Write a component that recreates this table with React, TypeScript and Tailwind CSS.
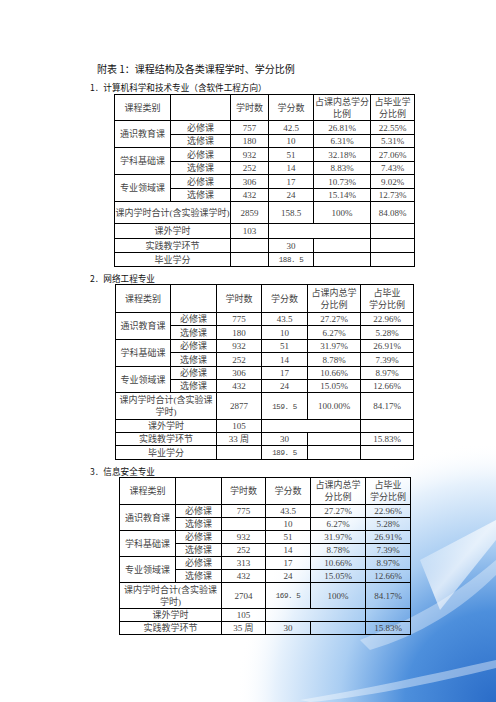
import type { ReactNode } from 'react'

const SERIF = 'font-["Liberation_Serif","Noto_Sans_CJK_SC",serif]'

type Row = [string, string, string, string, string]

interface TableSpec {
  left: number
  widths: number[]
  headH: number
  rowHs: number[]
  head5: ReactNode
  head6: ReactNode
  groups: { name: string; rows: Row[] }[]
  total: { label: ReactNode; h: number; vals: ReactNode[] }
  outside: { h: number; val: string }
  practice: { h: number; hours: string; credit: string; pct: string }
  grad?: { h: number; val: ReactNode }
}

function Mono({ children }: { children: ReactNode }) {
  return <span className='font-["Liberation_Mono",monospace] text-[7.5px] tracking-[-0.4px]'>{children}</span>
}

const cell = 'border border-black text-center align-middle p-0 leading-[12px]'

function CourseTable({ spec }: { spec: TableSpec }) {
  let r = 0
  return (
    <table
      className={`table-fixed border-collapse text-[9px] text-[#444] ${SERIF}`}
      style={{ marginLeft: spec.left, width: spec.widths.reduce((a, b) => a + b, 0) }}
    >
      <colgroup>
        {spec.widths.map((w, i) => (
          <col key={i} style={{ width: w }} />
        ))}
      </colgroup>
      <tbody>
        <tr style={{ height: spec.headH }}>
          <td className={cell}>课程类别</td>
          <td className={cell}></td>
          <td className={cell}>学时数</td>
          <td className={cell}>学分数</td>
          <td className={cell}>{spec.head5}</td>
          <td className={cell}>{spec.head6}</td>
        </tr>
        {spec.groups.map((g) =>
          g.rows.map((row, i) => {
            const h = spec.rowHs[r++]
            return (
              <tr key={g.name + i} style={{ height: h }}>
                {i === 0 && (
                  <td className={cell} rowSpan={g.rows.length}>
                    {g.name}
                  </td>
                )}
                {row.map((v, j) => (
                  <td key={j} className={cell}>
                    {v}
                  </td>
                ))}
              </tr>
            )
          })
        )}
        <tr style={{ height: spec.total.h }}>
          <td className={cell} colSpan={2}>
            {spec.total.label}
          </td>
          {spec.total.vals.map((v, j) => (
            <td key={j} className={cell}>
              {v}
            </td>
          ))}
        </tr>
        <tr style={{ height: spec.outside.h }}>
          <td className={cell} colSpan={2}>课外学时</td>
          <td className={cell}>{spec.outside.val}</td>
          <td className={cell} colSpan={2}></td>
          <td className={cell}></td>
        </tr>
        <tr style={{ height: spec.practice.h }}>
          <td className={cell} colSpan={2}>实践教学环节</td>
          <td className={cell}>{spec.practice.hours}</td>
          <td className={cell}>{spec.practice.credit}</td>
          <td className={cell}></td>
          <td className={cell}>{spec.practice.pct}</td>
        </tr>
        {spec.grad && (
          <tr style={{ height: spec.grad.h }}>
            <td className={cell} colSpan={2}>毕业学分</td>
            <td className={cell}></td>
            <td className={cell}>{spec.grad.val}</td>
            <td className={cell}></td>
            <td className={cell}></td>
          </tr>
        )}
      </tbody>
    </table>
  )
}

const t1: TableSpec = {
  left: 114,
  widths: [56, 60, 38, 45, 57, 44],
  headH: 26,
  rowHs: [14, 13, 14, 13, 14, 13],
  head5: (
    <>
      占课内总学分
      <br />
      比例
    </>
  ),
  head6: (
    <>
      占毕业学
      <br />
      分比例
    </>
  ),
  groups: [
    { name: '通识教育课', rows: [['必修课', '757', '42.5', '26.81%', '22.55%'], ['选修课', '180', '10', '6.31%', '5.31%']] },
    { name: '学科基础课', rows: [['必修课', '932', '51', '32.18%', '27.06%'], ['选修课', '252', '14', '8.83%', '7.43%']] },
    { name: '专业领域课', rows: [['必修课', '306', '17', '10.73%', '9.02%'], ['选修课', '432', '24', '15.14%', '12.73%']] },
  ],
  total: { label: '课内学时合计(含实验课学时)', h: 22, vals: ['2859', '158.5', '100%', '84.08%'] },
  outside: { h: 15, val: '103' },
  practice: { h: 14, hours: '', credit: '30', pct: '' },
  grad: { h: 13, val: <Mono>188. 5</Mono> },
}

const head56 = {
  head5: (
    <>
      占课内总学
      <br />
      分比例
    </>
  ),
  head6: (
    <>
      占毕业
      <br />
      学分比例
    </>
  ),
}

const t2: TableSpec = {
  left: 115,
  widths: [55, 46, 45, 46, 53, 53],
  headH: 28,
  rowHs: [12, 14, 12, 14, 13, 13],
  ...head56,
  groups: [
    { name: '通识教育课', rows: [['必修课', '775', '43.5', '27.27%', '22.96%'], ['选修课', '180', '10', '6.27%', '5.28%']] },
    { name: '学科基础课', rows: [['必修课', '932', '51', '31.97%', '26.91%'], ['选修课', '252', '14', '8.78%', '7.39%']] },
    { name: '专业领域课', rows: [['必修课', '306', '17', '10.66%', '8.97%'], ['选修课', '432', '24', '15.05%', '12.66%']] },
  ],
  total: {
    label: (
      <>
        课内学时合计(含实验课
        <br />
        学时)
      </>
    ),
    h: 27,
    vals: ['2877', <Mono key="m">159. 5</Mono>, '100.00%', '84.17%'],
  },
  outside: { h: 13, val: '105' },
  practice: { h: 13, hours: '33 周', credit: '30', pct: '15.83%' },
  grad: { h: 14, val: <Mono>189. 5</Mono> },
}

const t3: TableSpec = {
  left: 119,
  widths: [56, 46, 44, 45, 55, 45],
  headH: 27,
  rowHs: [13, 13, 13, 13, 13, 13],
  ...head56,
  groups: [
    { name: '通识教育课', rows: [['必修课', '775', '43.5', '27.27%', '22.96%'], ['选修课', '', '10', '6.27%', '5.28%']] },
    { name: '学科基础课', rows: [['必修课', '932', '51', '31.97%', '26.91%'], ['选修课', '252', '14', '8.78%', '7.39%']] },
    { name: '专业领域课', rows: [['必修课', '313', '17', '10.66%', '8.97%'], ['选修课', '432', '24', '15.05%', '12.66%']] },
  ],
  total: {
    label: (
      <>
        课内学时合计(含实验课
        <br />
        学时)
      </>
    ),
    h: 26,
    vals: ['2704', <Mono key="m">169. 5</Mono>, '100%', '84.17%'],
  },
  outside: { h: 13, val: '105' },
  practice: { h: 13, hours: '35 周', credit: '30', pct: '15.83%' },
}

function Backdrop() {
  return (
    <svg className="pointer-events-none absolute inset-0" width="496" height="702" viewBox="0 0 496 702">
      <defs>
        <radialGradient id="glow" cx="496" cy="702" r="260" gradientUnits="userSpaceOnUse">
          <stop offset="0" stopColor="#2a6cc8" />
          <stop offset="0.35" stopColor="#4d8fdc" />
          <stop offset="0.6" stopColor="#a9cdf2" />
          <stop offset="0.85" stopColor="#e6f1fc" />
          <stop offset="1" stopColor="#ffffff" stopOpacity="0" />
        </radialGradient>
        <linearGradient id="streak" x1="0" y1="0" x2="1" y2="1">
          <stop offset="0" stopColor="#ffffff" stopOpacity="0" />
          <stop offset="0.5" stopColor="#ffffff" stopOpacity="0.7" />
          <stop offset="1" stopColor="#ffffff" stopOpacity="0" />
        </linearGradient>
      </defs>
      <rect x="0" y="0" width="496" height="702" fill="url(#glow)" />
      <path d="M420 560 L496 520 L496 540 L440 610 Z" fill="url(#streak)" />
      <path d="M360 640 C410 620 450 600 496 560 L496 575 C460 610 420 635 370 650 Z" fill="#ffffff" opacity="0.35" />
      <path d="M300 700 C360 690 430 675 496 660 L496 668 C430 684 360 698 310 702 Z" fill="#ffffff" opacity="0.4" />
    </svg>
  )
}

export default function App() {
  const heading = 'font-["Noto_Sans_CJK_SC","Liberation_Sans",sans-serif] text-[#111]'
  return (
    <div className="relative h-[702px] w-[496px] overflow-hidden bg-white">
      <Backdrop />
      <div className="relative pt-[63px]">
        <p className={`${heading} ml-[97px] h-[12px] text-[10px] leading-[12px]`}>附表 1：课程结构及各类课程学时、学分比例</p>
        <p className={`${heading} ml-[90px] mt-[6px] h-[12px] text-[8.6px] leading-[12px]`}>1．计算机科学和技术专业（含软件工程方向）</p>
        <div className="mt-px">
          <CourseTable spec={t1} />
        </div>
        <p className={`${heading} ml-[90px] mt-[5px] h-[12px] text-[8.6px] leading-[12px]`}>2．网络工程专业</p>
        <CourseTable spec={t2} />
        <p className={`${heading} ml-[90px] mt-[5px] h-[12px] text-[8.6px] leading-[12px]`}>3．信息安全专业</p>
        <CourseTable spec={t3} />
      </div>
    </div>
  )
}
